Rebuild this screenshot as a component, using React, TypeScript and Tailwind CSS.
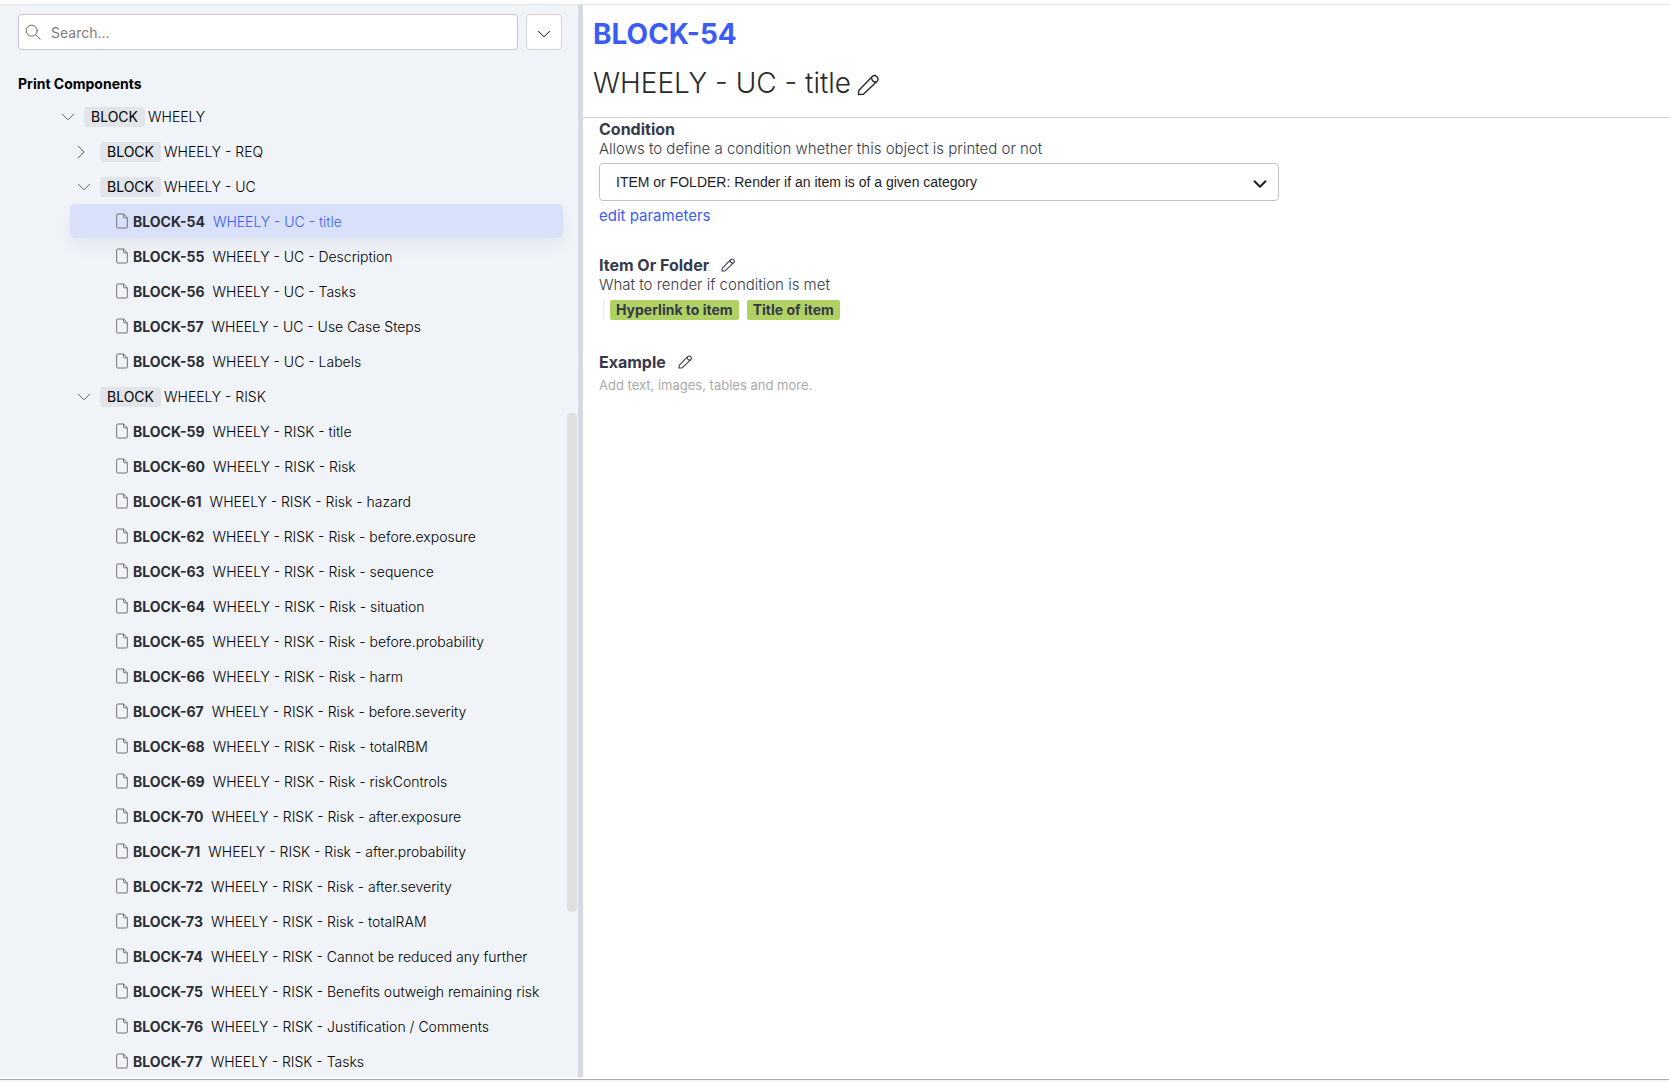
import React from 'react';

type Leaf = { id: number; name: string };

const ucItems: Leaf[] = [
  { id: 54, name: 'WHEELY - UC - title' },
  { id: 55, name: 'WHEELY - UC - Description' },
  { id: 56, name: 'WHEELY - UC - Tasks' },
  { id: 57, name: 'WHEELY - UC - Use Case Steps' },
  { id: 58, name: 'WHEELY - UC - Labels' },
];

const riskItems: Leaf[] = [
  { id: 59, name: 'WHEELY - RISK - title' },
  { id: 60, name: 'WHEELY - RISK - Risk' },
  { id: 61, name: 'WHEELY - RISK - Risk - hazard' },
  { id: 62, name: 'WHEELY - RISK - Risk - before.exposure' },
  { id: 63, name: 'WHEELY - RISK - Risk - sequence' },
  { id: 64, name: 'WHEELY - RISK - Risk - situation' },
  { id: 65, name: 'WHEELY - RISK - Risk - before.probability' },
  { id: 66, name: 'WHEELY - RISK - Risk - harm' },
  { id: 67, name: 'WHEELY - RISK - Risk - before.severity' },
  { id: 68, name: 'WHEELY - RISK - Risk - totalRBM' },
  { id: 69, name: 'WHEELY - RISK - Risk - riskControls' },
  { id: 70, name: 'WHEELY - RISK - Risk - after.exposure' },
  { id: 71, name: 'WHEELY - RISK - Risk - after.probability' },
  { id: 72, name: 'WHEELY - RISK - Risk - after.severity' },
  { id: 73, name: 'WHEELY - RISK - Risk - totalRAM' },
  { id: 74, name: 'WHEELY - RISK - Cannot be reduced any further' },
  { id: 75, name: 'WHEELY - RISK - Benefits outweigh remaining risk' },
  { id: 76, name: 'WHEELY - RISK - Justification / Comments' },
  { id: 77, name: 'WHEELY - RISK - Tasks' },
];

const Chevron = ({ open = true, className = '' }: { open?: boolean; className?: string }) => (
  <svg viewBox="0 0 14 14" fill="none" stroke="currentColor" strokeLinecap="round" strokeLinejoin="round" className={className}>
    <path d={open ? 'M1.5 4.3 7 9.8 12.5 4.3' : 'M1.2 1 7.2 7 1.2 13'} />
  </svg>
);

const FileIcon = () => (
  <svg viewBox="0 0 12 16" fill="none" stroke="#707276" className="w-3 h-4 shrink-0">
    <path d="M1.7 1H7.6L11.3 4.7V14A1 1 0 0 1 10.3 15H1.7A1 1 0 0 1 .7 14V2A1 1 0 0 1 1.7 1Z" />
    <path d="M7.6 1V4.2A.6.6 0 0 0 8.2 4.8H11.3" />
  </svg>
);

const Pencil = ({ className = '' }: { className?: string }) => (
  <svg viewBox="0 0 22 22" fill="none" stroke="currentColor" strokeLinejoin="round" className={className}>
    <path d="M1.4 20.6 2 16.2 15.2 2.6A3.4 3.4 0 0 1 20.1 7.3L6.4 20.3Z" />
    <path d="M14.6 3.2C14.2 5.8 16.3 8.4 19.4 8" />
  </svg>
);

function Folder({ name, level, open = true }: { name: string; level: 1 | 2; open?: boolean }) {
  return (
    <div className={`flex items-center h-[35px] ${level === 1 ? 'pl-[61px]' : 'pl-[77px]'}`}>
      <button aria-label={`Toggle ${name}`} className="w-[23px] text-[#5c5f63]">
        <Chevron open={open} className="w-3.5 h-3.5" />
      </button>
      <span className="w-[61px] h-5 rounded-[3px] bg-[#e1e4e9] text-center leading-5">BLOCK</span>
      <span className="ml-[3px] font-light">{name}</span>
    </div>
  );
}

function LeafRow({ item, selected = false }: { item: Leaf; selected?: boolean }) {
  return (
    <div className="pl-[70px] pr-[15px] h-[35px]">
      <a
        href={`#block-${item.id}`}
        className={`flex items-center h-[34px] pl-[46px] rounded-[5px] whitespace-nowrap ${
          selected ? 'bg-[#d9e1fa] text-[#3a5cf5] shadow-[0_8px_16px_rgba(60,70,100,0.07)]' : ''
        }`}
      >
        <FileIcon />
        <span className="ml-[5px] font-bold text-[#2b2d33]">BLOCK-{item.id}</span>
        <span className="ml-2 font-light">{item.name}</span>
      </a>
    </div>
  );
}

function Sidebar() {
  return (
    <aside className="relative w-[583px] shrink-0 bg-[#f0f3f8] border-r-[5px] border-[#d5dae2] overflow-hidden text-[14px] text-black">
      <div className="flex gap-2 pl-[18px] pr-4 pt-[9px]">
        <label className="flex items-center grow h-9 rounded border border-[#c4c5c8] bg-white pl-1.5">
          <svg viewBox="0 0 16 16" fill="none" stroke="#66696d" strokeLinecap="round" className="w-4 h-4">
            <circle cx="6.7" cy="6.7" r="5.5" />
            <path d="M10.7 10.7 15.2 15.2" />
          </svg>
          <input type="text" aria-label="Search" placeholder="Search..." className="grow ml-2.5 outline-none placeholder:text-[#7b7d80]" />
        </label>
        <button aria-label="Search options" className="flex items-center justify-center w-9 h-9 rounded border border-[#d5d6d9] bg-white">
          <Chevron className="w-3.5 h-3.5 mt-1" />
        </button>
      </div>
      <h2 className="pl-[18px] mt-6 h-[25px] leading-5 font-bold">Print Components</h2>
      <nav>
        <Folder name="WHEELY" level={1} />
        <Folder name="WHEELY - REQ" level={2} open={false} />
        <Folder name="WHEELY - UC" level={2} />
        {ucItems.map((item) => (
          <LeafRow key={item.id} item={item} selected={item.id === 54} />
        ))}
        <Folder name="WHEELY - RISK" level={2} />
        {riskItems.map((item) => (
          <LeafRow key={item.id} item={item} />
        ))}
      </nav>
      {/* scrollbar thumb */}
      <div className="absolute right-px top-[408px] w-2.5 h-[499px] rounded bg-[#dfdfe0]" />
    </aside>
  );
}

function Section({ title, hint, editable = false, children }: { title: string; hint?: string; editable?: boolean; children: React.ReactNode }) {
  return (
    <section>
      <h3 className="flex items-center h-5 text-[16px] font-bold">
        {title}
        {editable && (
          <button aria-label={`Edit ${title}`} className="ml-3">
            <Pencil className="w-3.5 h-3.5 stroke-[1.6]" />
          </button>
        )}
      </h3>
      {hint && <p className="h-5 leading-5 text-[15px] font-light">{hint}</p>}
      {children}
    </section>
  );
}

export default function App() {
  return (
    <div className="flex flex-col h-screen bg-white font-['Inter',sans-serif]">
      <div className="h-[5px] shrink-0 border-b border-[#e4e5e7]" />
      <div className="flex grow min-h-0">
        <Sidebar />
        <main className="grow text-[#363948]">
          <header className="h-[113px] border-b border-[#d3d4d6] pl-2.5 pt-2.5">
            <h1 className="h-[49px] leading-[38px] text-[28px] font-bold text-[#3a5cf5]">BLOCK-54</h1>
            <h2 className="flex items-center h-[38px] leading-[38px] text-[28px] font-light text-[#2a2a2c]">
              WHEELY - UC - title
              <button aria-label="Edit title" className="ml-1.5">
                <Pencil className="w-[22px] h-[22px] mt-1 stroke-[1.4]" />
              </button>
            </h2>
          </header>
          <div className="flex flex-col gap-7 pl-4 pt-px">
            <Section title="Condition" hint="Allows to define a condition whether this object is printed or not">
              <div className="relative w-[680px] max-w-full mt-1">
                <select
                  aria-label="Condition"
                  className="w-full h-[38px] appearance-none rounded border border-[#c1c2c5] bg-white pl-4 text-[14px] text-[#1d1d1f] font-['Liberation_Sans',sans-serif]"
                >
                  <option>ITEM or FOLDER: Render if an item is of a given category</option>
                </select>
                <Chevron className="absolute right-3 top-3 w-3.5 h-3.5 mt-0.5 stroke-2 pointer-events-none text-[#222]" />
              </div>
              <a href="#parameters" className="block w-fit mt-1 h-[22px] leading-[22px] text-[15px] text-[#3a5cf5]">edit parameters</a>
            </Section>
            <Section title="Item Or Folder" hint="What to render if condition is met" editable>
              <div className="flex items-center gap-2 ml-1 mt-[5px] mb-1 h-5 border-l border-[#e7e8ea] pl-1.5 text-[14px] leading-5 font-bold">
                <span className="px-1.5 rounded-[2px] bg-[#b0d264]">Hyperlink to item</span>
                <span className="px-1.5 rounded-[2px] bg-[#b0d264]">Title of item</span>
              </div>
            </Section>
            <Section title="Example" editable>
              <p className="mt-[3px] h-5 leading-5 text-[13px] text-[#a9a9ab]">Add text, images, tables and more.</p>
            </Section>
          </div>
        </main>
      </div>
      <div className="h-[5px] shrink-0 border-t border-white bg-[#f6f6f6]">
        <div className="h-0.5 border-b border-[#adadad] bg-white" />
      </div>
    </div>
  );
}
